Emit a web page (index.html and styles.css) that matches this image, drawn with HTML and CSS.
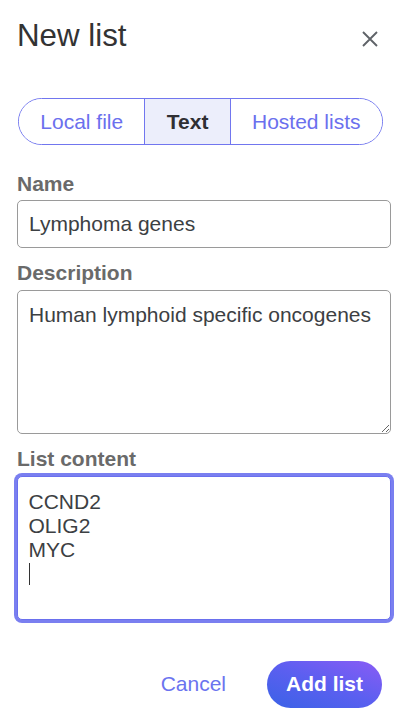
FILE: index.html
```html
<!DOCTYPE html>
<html lang="en">
<head>
<meta charset="utf-8">
<title>New list</title>
<link rel="stylesheet" href="styles.css">
</head>
<body>
<div class="dialog">
  <div class="header">
    <h1 class="title">New list</h1>
    <button class="close" aria-label="Close">
      <svg width="18" height="18" viewBox="0 0 18 18"><path d="M2 2 L16 16 M16 2 L2 16" stroke="#5f6368" stroke-width="1.9" stroke-linecap="butt" fill="none"/></svg>
    </button>
  </div>

  <div class="segmented">
    <button class="seg">Local file</button>
    <button class="seg seg-active">Text</button>
    <button class="seg">Hosted lists</button>
  </div>

  <label class="label label-first">Name</label>
  <input class="field" type="text" value="Lymphoma genes">

  <label class="label">Description</label>
  <textarea class="field area">Human lymphoid specific oncogenes</textarea>

  <label class="label">List content</label>
  <div class="field area focused">
    <div class="line">CCND2</div>
    <div class="line">OLIG2</div>
    <div class="line">MYC</div>
    <div class="line"><span class="caret"></span></div>
  </div>

  <div class="footer">
    <button class="cancel">Cancel</button>
    <button class="primary">Add list</button>
  </div>
</div>
</body>
</html>
```

FILE: styles.css
```css
* {
  box-sizing: border-box;
}

html, body {
  margin: 0;
  padding: 0;
  background: #ffffff;
}

body {
  font-family: "Liberation Sans", Arial, sans-serif;
  font-size: 21px;
  color: #333333;
}

.dialog {
  padding: 18px 21px 0 17px;
  display: flex;
  flex-direction: column;
}

.header {
  display: flex;
  justify-content: space-between;
  align-items: flex-start;
}

.title {
  margin: 0;
  font-size: 31.3px;
  font-weight: 400;
  line-height: 35.6px;
  color: #333333;
}

.close {
  margin: 12px 12px 0 0;
  padding: 0;
  border: 0;
  background: none;
  width: 18px;
  height: 18px;
  display: flex;
}

.segmented {
  margin-top: 44px;
  margin-left: 1px;
  align-self: flex-start;
  display: flex;
  height: 47px;
  border: 1.5px solid #7176ef;
  border-radius: 24px;
  overflow: hidden;
}

.seg {
  font-family: inherit;
  font-size: 21px;
  color: #6b70ee;
  background: #ffffff;
  border: 0;
  padding: 0 21.3px;
  height: 100%;
  line-height: 1;
}

.seg + .seg {
  border-left: 1.5px solid #7176ef;
}

.seg-active {
  background: #eceefb;
  color: #2f2f33;
  font-weight: 700;
}

.label {
  display: block;
  margin-top: 13px;
  font-weight: 700;
  color: #6a6a6a;
  line-height: 23.7px;
}

.label-first {
  margin-top: 27px;
}

.field {
  display: block;
  width: 100%;
  margin-top: 5px;
  font-family: inherit;
  font-size: 21px;
  color: #3c4043;
  background: #ffffff;
  border: 1px solid #9a9a9a;
  border-radius: 5px;
  outline: none;
}

input.field {
  height: 48px;
  padding: 0 11px;
}

.area {
  height: 144px;
  padding: 12px 11px;
  line-height: 24px;
  resize: vertical;
}

.focused {
  border: 1.5px solid #6a70ee;
  box-shadow: 0 0 0 3px #7a7ff0;
  padding: 13.5px 10.5px 11px;
}

.line {
  height: 24px;
}

.caret {
  display: inline-block;
  width: 1.5px;
  height: 22px;
  background: #333333;
  margin-top: 1px;
  vertical-align: top;
}

.footer {
  margin-top: 41px;
  margin-right: 9px;
  display: flex;
  justify-content: flex-end;
  align-items: center;
  gap: 20px;
}

.cancel {
  font-family: inherit;
  font-size: 21px;
  color: #6b73ef;
  background: none;
  border: 0;
  padding: 0 21px;
  height: 47px;
}

.primary {
  font-family: inherit;
  font-size: 21px;
  font-weight: 700;
  color: #ffffff;
  border: 0;
  height: 47px;
  padding: 0 19px;
  border-radius: 24px;
  background: linear-gradient(200deg, #8a5cf5 0%, #5b5ff0 50%, #3a62e6 100%);
}
```
